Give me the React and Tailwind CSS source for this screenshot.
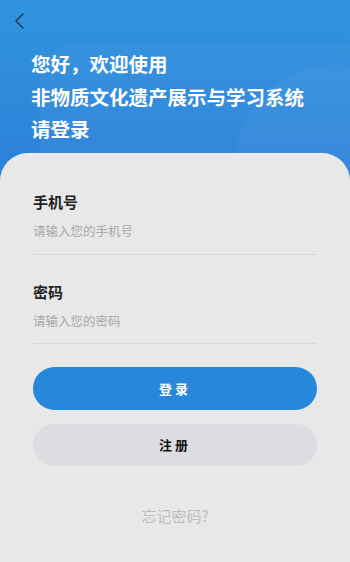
import React from "react";

const font = { fontFamily: '"Noto Sans CJK SC", "Noto Sans", sans-serif' };

export default function App() {
  return (
    <div className="relative w-[350px] h-[562px] overflow-hidden bg-[#e8e8e8]" style={font}>
      {/* header */}
      <div className="relative h-[190px] bg-gradient-to-b from-[#3194de] to-[#2b80d8] overflow-hidden">
        {/* soft decoration */}
        <div className="absolute left-[40px] top-[43px] w-[340px] h-[200px] rounded-tl-[40px] bg-white/[0.03]" />
        <div className="absolute left-[235px] top-[65px] w-[200px] h-[200px] rounded-full bg-white/[0.035]" />

        <div className="relative px-[13px] pt-[12px]">
          <svg width="14" height="18" viewBox="0 0 14 18" fill="none">
            <path d="M10 2 L3 9 L10 16" stroke="#1d3d63" strokeWidth="1.6" strokeLinecap="round" strokeLinejoin="round" />
          </svg>
        </div>
        <div className="relative pl-[31px] pt-[18px] text-white font-bold text-[19.5px] leading-[32.5px]">
          <div>您好，欢迎使用</div>
          <div>非物质文化遗产展示与学习系统</div>
          <div>请登录</div>
        </div>
      </div>

      {/* card */}
      <div className="absolute left-0 right-0 top-[153px] bottom-0 bg-[#e8e8e8] rounded-t-[28px] border-t border-white/40 px-[33px] pt-[37px]">
        <div className="text-[15px] font-bold text-[#222] leading-[22px]">手机号</div>
        <div className="mt-[8px] text-[12.5px] text-[#a9a9a9] leading-[20px]">请输入您的手机号</div>
        <div className="mt-[13px] h-px bg-[#d6d6d6]" />

        <div className="mt-[26px] text-[15px] font-bold text-[#222] leading-[22px]">密码</div>
        <div className="mt-[8px] text-[12.5px] text-[#a9a9a9] leading-[20px]">请输入您的密码</div>
        <div className="mt-[12px] h-px bg-[#d6d6d6]" />

        <div className="mt-[23px] h-[43px] rounded-full bg-[#2687db] flex items-center justify-center text-white font-bold text-[13px] tracking-[3px]">
          登录
        </div>
        <div className="mt-[14px] h-[42px] rounded-full bg-[#dcdde0] flex items-center justify-center text-[#111] font-bold text-[13px] tracking-[3px]">
          注册
        </div>

        <div className="mt-[39px] text-center text-[15px] text-[#bdbdbd]">忘记密码?</div>
      </div>
    </div>
  );
}
